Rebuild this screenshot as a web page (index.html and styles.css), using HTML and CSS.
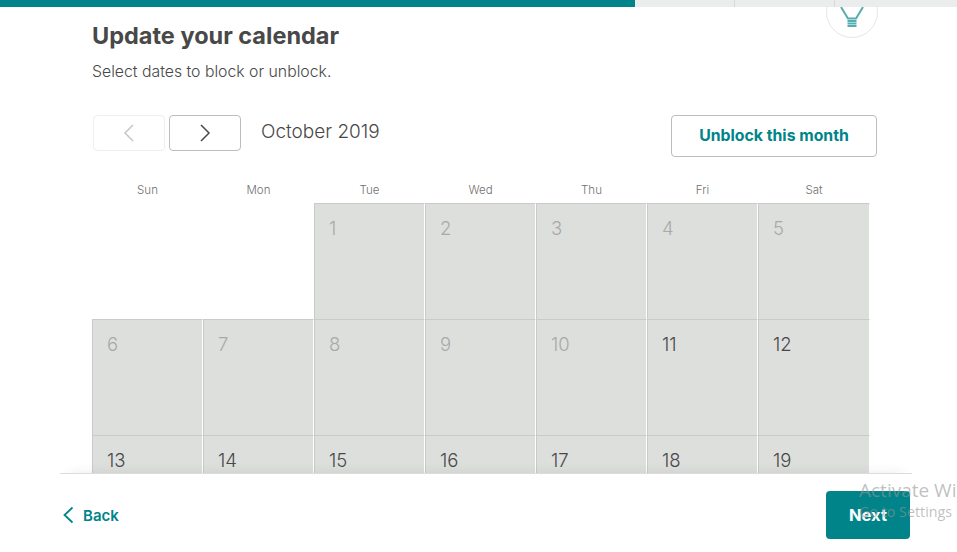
FILE: index.html
```html
<!DOCTYPE html>
<html lang="en">
<head>
    <meta charset="UTF-8">
    <title>Update your calendar</title>
    <link rel="stylesheet" href="styles.css">
</head>
<body>
    <!-- Progress bar -->
    <div class="progress">
        <div class="progress-fill"></div>
        <div class="progress-step"></div>
        <div class="progress-step"></div>
        <div class="progress-step"></div>
    </div>

    <!-- Tip bulb hanging under the progress bar -->
    <div class="tip">
        <svg width="26" height="22" viewBox="0 0 26 22" fill="none" stroke="#56adb0" stroke-width="2">
            <path d="M2 0 L9 11.500 H17 L24 0"/>
            <path d="M8.500 14 H17.500"/>
            <path d="M8.500 16.500 H17.500"/>
            <path d="M8.500 19 H17.500"/>
        </svg>
    </div>

    <main class="content">
        <h1>Update your calendar</h1>
        <p class="subtitle">Select dates to block or unblock.</p>

        <div class="toolbar">
            <div class="month-nav">
                <button class="nav-btn nav-disabled">
                    <svg width="14" height="18" viewBox="0 0 14 18" fill="none" stroke="#c4c6c4" stroke-width="1.500"><path d="M11 1 L3 9 L11 17"/></svg>
                </button>
                <button class="nav-btn">
                    <svg width="14" height="18" viewBox="0 0 14 18" fill="none" stroke="#484848" stroke-width="1.500"><path d="M3 1 L11 9 L3 17"/></svg>
                </button>
                <span class="month-name">October 2019</span>
            </div>
            <button class="unblock-btn">Unblock this month</button>
        </div>

        <div class="weekdays">
            <span>Sun</span><span>Mon</span><span>Tue</span><span>Wed</span><span>Thu</span><span>Fri</span><span>Sat</span>
        </div>

        <div class="calendar">
            <div class="cell cell-empty"></div>
            <div class="cell cell-empty"></div>
            <div class="cell cell-past">1</div>
            <div class="cell cell-past">2</div>
            <div class="cell cell-past">3</div>
            <div class="cell cell-past">4</div>
            <div class="cell cell-past">5</div>
            <div class="cell cell-past">6</div>
            <div class="cell cell-past">7</div>
            <div class="cell cell-past">8</div>
            <div class="cell cell-past">9</div>
            <div class="cell cell-past">10</div>
            <div class="cell">11</div>
            <div class="cell">12</div>
            <div class="cell">13</div>
            <div class="cell">14</div>
            <div class="cell">15</div>
            <div class="cell">16</div>
            <div class="cell">17</div>
            <div class="cell">18</div>
            <div class="cell">19</div>
        </div>
    </main>

    <footer class="footer">
        <a href="#" class="back-link">
            <svg width="12" height="18" viewBox="0 0 12 18" fill="none" stroke="#008489" stroke-width="1.800"><path d="M10.500 1.500 L2.500 9 L10.500 16.500"/></svg>
            Back
        </a>
        <button class="next-btn">Next</button>
    </footer>

    <!-- Windows watermark over the page -->
    <div class="watermark">
        <div class="watermark-title">Activate Windows</div>
        <div class="watermark-sub">Go to Settings</div>
    </div>
</body>
</html>
```

FILE: styles.css
```css
body {
    margin: 0;
    width: 957px;
    height: 552px;
    overflow: hidden;
    position: relative;
    display: flex;
    flex-direction: column;
    background: #ffffff;
    color: #484848;
    font-family: Inter, sans-serif;
}

/* Progress bar */
.progress {
    display: flex;
    flex: none;
    position: relative;
    z-index: 1;
    height: 7px;
    background: #ebedec;
}

.progress-fill {
    width: 635px;
    background: #008489;
}

.progress-step {
    width: 100px;
    border-right: 1px solid #d8d9d8;
    box-sizing: border-box;
}

.progress-step:last-child {
    border-right: none;
}

/* Tip bulb */
.tip {
    position: absolute;
    top: -14px;
    left: 826px;
    width: 50px;
    height: 50px;
    border: 1px solid #e6e6e6;
    border-radius: 50%;
    background: #ffffff;
    display: flex;
    justify-content: center;
}

.tip svg {
    margin-top: 20px;
}

/* Main column */
.content {
    flex: 1;
    min-height: 0;
    overflow: hidden;
    padding-left: 92px;
    width: 785px;
}

h1 {
    margin: 13px 0 0;
    font-size: 23.500px;
    line-height: 32px;
    font-weight: 700;
    color: #484848;
}

.subtitle {
    margin: 9px 0 0;
    font-size: 15.800px;
    line-height: 21px;
    font-weight: 300;
}

.toolbar {
    display: flex;
    justify-content: space-between;
    align-items: flex-start;
    margin-top: 33px;
}

.month-nav {
    display: flex;
    align-items: flex-start;
    gap: 4px;
    padding-left: 1px;
}

.nav-btn {
    width: 72px;
    height: 36px;
    padding: 0;
    background: #ffffff;
    border: 1px solid #bdbdbd;
    border-radius: 4px;
    display: flex;
    align-items: center;
    justify-content: center;
}

.nav-disabled {
    border-color: #efefef;
}

.month-name {
    margin-left: 16px;
    font-size: 19px;
    line-height: 34px;
    font-weight: 300;
}

.unblock-btn {
    width: 206px;
    height: 42px;
    padding: 0 0 2px;
    background: #ffffff;
    border: 1px solid #bdbdbd;
    border-radius: 4px;
    color: #008489;
    font-family: Inter, sans-serif;
    font-size: 15.800px;
    font-weight: 700;
}

/* Calendar */
.weekdays {
    display: grid;
    grid-template-columns: repeat(6, 111px) 112px;
    margin-top: 25px;
    font-size: 11.500px;
    line-height: 16px;
    font-weight: 300;
    color: #6f6f6f;
    text-align: center;
}

.calendar {
    display: grid;
    grid-template-columns: repeat(6, 111px) 112px;
    grid-auto-rows: 116px;
    margin-top: 5px;
}

.cell {
    box-sizing: border-box;
    padding: 12px 0 0 14px;
    background: #dddfdc;
    border-top: 1px solid #c9cbc8;
    border-left: 1px solid #c9cbc8;
    border-right: 1px solid #ffffff;
    font-size: 18.500px;
    line-height: 24px;
    font-weight: 300;
    color: #484848;
}

.cell-empty {
    background: #ffffff;
    border-color: #ffffff;
}

.cell-past {
    color: #a8aaa8;
}

/* Footer */
.footer {
    flex: none;
    position: relative;
    height: 79px;
    margin: 0 45px 0 60px;
    padding: 17px 2px 0;
    box-sizing: border-box;
    border-top: 1px solid #dcdcdc;
    background: #ffffff;
    box-shadow: 0 -10px 12px -10px rgba(0, 0, 0, 0.08);
    display: flex;
    justify-content: space-between;
    align-items: flex-start;
}

.back-link {
    display: flex;
    align-items: center;
    gap: 9px;
    height: 48px;
    color: #008489;
    font-size: 15px;
    font-weight: 600;
    text-decoration: none;
}

.next-btn {
    width: 84px;
    height: 48px;
    background: #008489;
    border: none;
    border-radius: 4px;
    color: #ffffff;
    font-family: Inter, sans-serif;
    font-size: 16.500px;
    font-weight: 700;
}

/* Watermark */
.watermark {
    position: absolute;
    top: 477px;
    left: 859px;
    white-space: nowrap;
    color: rgba(150, 150, 150, 0.6);
    font-family: "Open Sans", sans-serif;
}

.watermark-title {
    font-size: 19px;
    line-height: 26px;
}

.watermark-sub {
    font-size: 14.300px;
    line-height: 18px;
}
```
